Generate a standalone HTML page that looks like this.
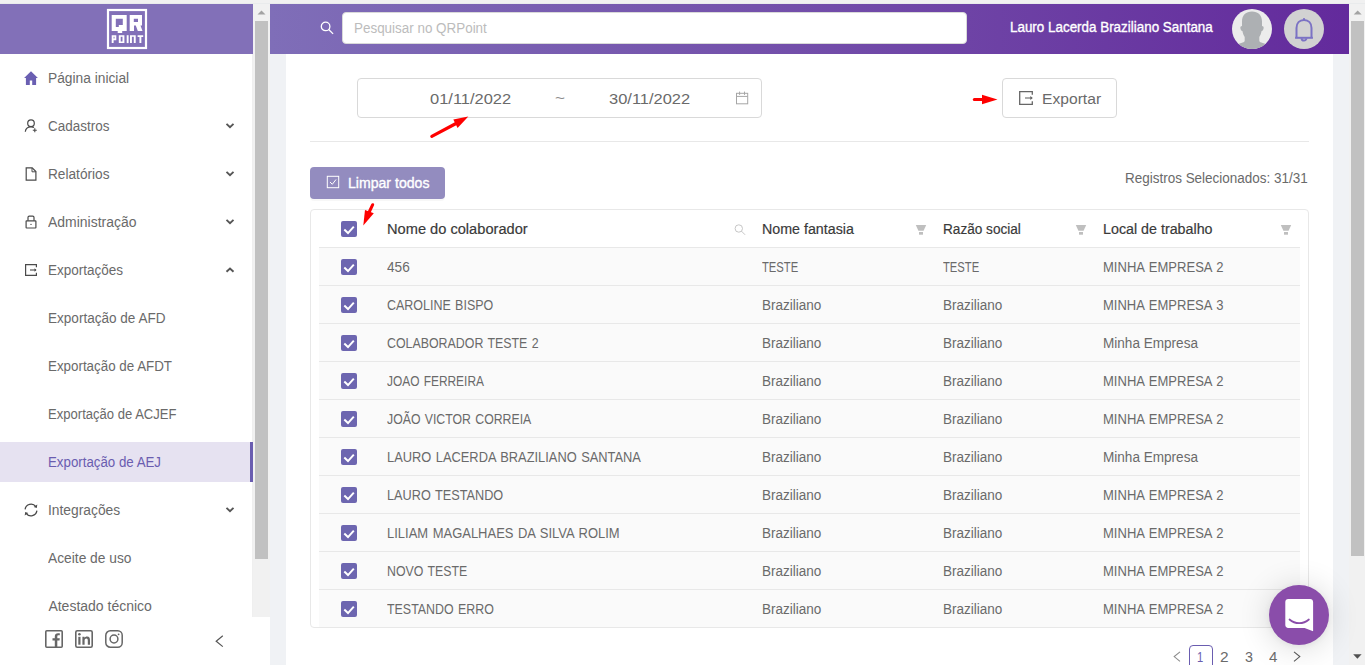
<!DOCTYPE html>
<html><head><meta charset="utf-8">
<style>
*{box-sizing:border-box;margin:0;padding:0}
html,body{width:1365px;height:665px;overflow:hidden}
body{background:#f0f2f5;font-family:"Liberation Sans",sans-serif;position:relative;color:#5a5a5a;font-size:14px}
.abs{position:absolute}
svg{position:absolute;overflow:visible}
#topstrip{left:0;top:0;width:1365px;height:4px;background:#f1f1f1;border-bottom:1px solid #e9ebec}
#side{left:0;top:4px;width:253px;height:661px;background:#fff}
#sidehead{left:0;top:4px;width:253px;height:50px;background:#8270b8}
#sidefoot{left:0;top:617px;width:270px;height:48px;background:#fff}
#sscroll{left:253px;top:4px;width:17px;height:613px;background:#f1f1f1}
#sthumb{left:255px;top:21px;width:13px;height:538px;background:#c1c1c1}
#tophead{left:270px;top:4px;width:1079px;height:50px;background:linear-gradient(90deg,#7f6eb8 0%,#7451ab 45%,#632a9c 100%)}
#main{left:286px;top:54px;width:1047px;height:611px;background:#fff}
#mscroll{left:1349px;top:4px;width:16px;height:661px;background:#f1f1f1}
#mthumb{left:1351px;top:21px;width:13px;height:535px;background:#c1c1c1}
#sel{left:0;top:442px;width:253px;height:40px;background:#e6e2f1;border-right:3px solid #6a5db0}
#search{left:342px;top:12px;width:625px;height:32px;background:#fff;border-radius:4px;border:1px solid #d9d9d9}
#datebox{left:357px;top:78px;width:405px;height:40px;border:1px solid #d9d9d9;border-radius:4px;background:#fff}
#expbtn{left:1002px;top:78px;width:115px;height:40px;border:1px solid #d9d9d9;border-radius:4px;background:#fff}
#divider{left:310px;top:141px;width:999px;height:1px;background:#e8e8e8}
#limpar{left:310px;top:167px;width:135px;height:32px;background:#938cbf;border-radius:4px;box-shadow:0 2px 0 rgba(0,0,0,0.03)}
#tbox{left:310px;top:209px;width:999px;height:419px;border:1px solid #e8e8e8;border-radius:4px;background:#fff}
.row{position:absolute;left:319px;width:981px;height:38px;background:#fafafa;border-bottom:1px solid #e8e8e8}
#hrow{position:absolute;left:319px;top:247px;width:981px;height:1px;background:#e8e8e8}
.cb{position:absolute;left:341px;width:16px;height:16px;background:#6d66b0;border-radius:2px}
.cb svg{left:0;top:0}
.t{position:absolute;white-space:pre;line-height:20px;height:20px;transform-origin:0 50%}
#pg1{left:1189px;top:645px;width:24px;height:24px;border:1px solid #6a5db0;border-radius:4px;background:#fff}
#avatar{left:1232px;top:9px;width:40px;height:40px;border-radius:50%;background:#ececec;overflow:hidden}
#bellc{left:1284px;top:9px;width:40px;height:40px;border-radius:50%;background:#d2d2d2}
#chat{left:1269px;top:585px;width:60px;height:60px;border-radius:50%;background:#8a4daa;box-shadow:0 1px 6px rgba(0,0,0,0.06),0 2px 32px rgba(0,0,0,0.16)}
</style></head><body>
<div class="abs" id="topstrip"></div>
<div class="abs" id="side"></div>
<div class="abs" id="sidehead"></div>
<div class="abs" id="sscroll"></div>
<div class="abs" id="sthumb"></div>
<div class="abs" id="sidefoot"></div>
<div class="abs" id="tophead"></div>
<div class="abs" id="main"></div>
<div class="abs" id="mscroll"></div>
<div class="abs" id="mthumb"></div>
<div class="abs" style="left:252px;top:54px;width:1px;height:563px;background:#efefef"></div>
<div class="abs" id="sel"></div>
<div class="abs" id="search"></div>
<div class="abs" id="datebox"></div>
<div class="abs" id="expbtn"></div>
<div class="abs" id="divider"></div>
<div class="abs" id="limpar"></div>
<div class="abs" id="tbox"></div>
<div id="hrow"></div>
<div class="row" style="top:248px"></div>
<div class="row" style="top:286px"></div>
<div class="row" style="top:324px"></div>
<div class="row" style="top:362px"></div>
<div class="row" style="top:400px"></div>
<div class="row" style="top:438px"></div>
<div class="row" style="top:476px"></div>
<div class="row" style="top:514px"></div>
<div class="row" style="top:552px"></div>
<div class="row" style="top:590px"></div>
<div class="cb" style="top:221px"><svg width="16" height="16" viewBox="0 0 16 16"><path d="M3.300 8.600l3.700 3.500l5.800-6.400" fill="none" stroke="#fff" stroke-width="2"/></svg></div>
<div class="cb" style="top:259px"><svg width="16" height="16" viewBox="0 0 16 16"><path d="M3.300 8.600l3.700 3.500l5.800-6.400" fill="none" stroke="#fff" stroke-width="2"/></svg></div>
<div class="cb" style="top:297px"><svg width="16" height="16" viewBox="0 0 16 16"><path d="M3.300 8.600l3.700 3.500l5.800-6.400" fill="none" stroke="#fff" stroke-width="2"/></svg></div>
<div class="cb" style="top:335px"><svg width="16" height="16" viewBox="0 0 16 16"><path d="M3.300 8.600l3.700 3.500l5.800-6.400" fill="none" stroke="#fff" stroke-width="2"/></svg></div>
<div class="cb" style="top:373px"><svg width="16" height="16" viewBox="0 0 16 16"><path d="M3.300 8.600l3.700 3.500l5.800-6.400" fill="none" stroke="#fff" stroke-width="2"/></svg></div>
<div class="cb" style="top:411px"><svg width="16" height="16" viewBox="0 0 16 16"><path d="M3.300 8.600l3.700 3.500l5.800-6.400" fill="none" stroke="#fff" stroke-width="2"/></svg></div>
<div class="cb" style="top:449px"><svg width="16" height="16" viewBox="0 0 16 16"><path d="M3.300 8.600l3.700 3.500l5.800-6.400" fill="none" stroke="#fff" stroke-width="2"/></svg></div>
<div class="cb" style="top:487px"><svg width="16" height="16" viewBox="0 0 16 16"><path d="M3.300 8.600l3.700 3.500l5.800-6.400" fill="none" stroke="#fff" stroke-width="2"/></svg></div>
<div class="cb" style="top:525px"><svg width="16" height="16" viewBox="0 0 16 16"><path d="M3.300 8.600l3.700 3.500l5.800-6.400" fill="none" stroke="#fff" stroke-width="2"/></svg></div>
<div class="cb" style="top:563px"><svg width="16" height="16" viewBox="0 0 16 16"><path d="M3.300 8.600l3.700 3.500l5.800-6.400" fill="none" stroke="#fff" stroke-width="2"/></svg></div>
<div class="cb" style="top:601px"><svg width="16" height="16" viewBox="0 0 16 16"><path d="M3.300 8.600l3.700 3.500l5.800-6.400" fill="none" stroke="#fff" stroke-width="2"/></svg></div>

<div class="abs" id="pg1"></div>
<div class="abs" id="avatar"><svg width="40" height="40" viewBox="0 0 40 40" style="left:0;top:0"><path d="M20 2.5c-6 0-10 3.5-10 10v4.5c-1.3 0-1.8 1-1.6 2.3.2 1.500.9 2.600 2 2.700.5 2.500 1.300 4.500 2.300 6v3.500c0 1-.7 1.800-2 2L3 36v6h34v-6l-7.700-2.500c-1.300-.3-2-1-2-2V28c1-1.500 1.800-3.500 2.300-6 1.100-.1 1.800-1.200 2-2.700.2-1.300-.3-2.300-1.600-2.300v-4.500c0-6.500-4-10-10-10z" fill="#adb0b3"/></svg></div>
<div class="abs" id="bellc"></div>
<div class="abs" id="chat"></div>
<!-- logo -->
<svg style="left:107px;top:9px" width="40" height="40" viewBox="0 0 40 40">
<rect x="1" y="1" width="38" height="38" fill="none" stroke="#fff" stroke-width="2.200"/>
<path fill="#fff" fill-rule="evenodd" d="M4.700 6h15v16h-4.500v2h-4.500v-2h-6zM8.800 9.700v8.300h3v-2h4v-6.300z"/>
<path fill="#fff" fill-rule="evenodd" d="M22.700 6h12.300v10.500h-1.500l2 5.500h-4.700l-2-5.500h-1.800v5.500h-4.300zM26.800 9.700v3.300h4.200v-3.300z"/>
<g fill="#fff">
<path fill-rule="evenodd" d="M4.700 26.200h4.600v5h-2.700v2.900h-1.900zM6.600 27.800v1.800h0.900v-1.800z"/>
<path fill-rule="evenodd" d="M11.800 26.200h5.600v7.900h-5.600zM13.700 27.800v4.700h1.800v-4.700z"/>
<rect x="19.700" y="26.200" width="1.900" height="7.900"/>
<path d="M23 26.200h5.700v7.900h-1.900v-6.300h-1.900v6.300h-1.900z"/>
<path d="M30.600 26.200h5.600v1.700h-1.850v6.200h-1.900v-6.200h-1.850z"/>
</g>
</svg>
<!-- scroll arrows -->
<svg style="left:253px;top:4px" width="17" height="17"><path d="M4.500 10.500l4-4l4 4z" fill="#a3a3a3"/></svg>
<svg style="left:1349px;top:4px" width="16" height="17"><path d="M4.700 10.500l4-4l4 4z" fill="#a3a3a3"/></svg>
<svg style="left:1349px;top:648px" width="16" height="17"><path d="M4.200 6.300l4.200 4.400l4.200-4.400z" fill="#505050"/></svg>
<!-- home -->
<svg style="left:24px;top:71px" width="14" height="14" viewBox="0 0 14 14"><path d="M7 0.300L0.100 6.900h1.800v7h3.900v-4.300h2.400v4.300h3.900v-7h1.800z" fill="#6a5fb2"/></svg>
<!-- user add -->
<svg style="left:24px;top:119px" width="14" height="14" viewBox="0 0 14 14" fill="none" stroke="#4a4a4a" stroke-width="1.200"><circle cx="7" cy="4.200" r="3.300"/><path d="M1.300 12.800c.3-3 2.500-5 5.700-5c1.200 0 2.200.3 3 .8"/><path d="M10.800 9.300v4M8.800 11.300h4" stroke-width="1.100"/></svg>
<!-- file -->
<svg style="left:25px;top:167px" width="12" height="14" viewBox="0 0 12 14" fill="none" stroke="#4a4a4a" stroke-width="1.200"><path d="M1.200 0.900h6l3.700 3.700v8.600h-9.700z"/><path d="M7 1v3.800h3.800" stroke-width="1"/></svg>
<!-- lock -->
<svg style="left:25px;top:215px" width="12" height="14" viewBox="0 0 12 14" fill="none" stroke="#4a4a4a" stroke-width="1.200"><rect x="1.100" y="5.800" width="9.800" height="7.200" rx="0.500"/><path d="M3 5.800v-3.300c0-.8.500-1.300 1.300-1.300h3.400c.8 0 1.300.5 1.300 1.300v3.300"/><circle cx="6" cy="9.400" r="0.700" fill="#4a4a4a" stroke="none"/></svg>
<!-- export (sidebar) -->
<svg style="left:25px;top:264px" width="12" height="12" viewBox="0 0 12 12" fill="none" stroke="#4a4a4a" stroke-width="1.200"><path d="M11.400 3.200v-2.600h-10.800v10.800h10.800v-2.600"/><path d="M5 6h6" stroke-width="1.100"/><path d="M9.500 4.300l2 1.700l-2 1.700z" fill="#4a4a4a" stroke="none"/></svg>
<!-- sync -->
<svg style="left:24px;top:503px" width="14" height="14" viewBox="0 0 14 14" fill="none" stroke="#4a4a4a" stroke-width="1.300"><path d="M1.100 6.300a5.900 5.900 0 0 1 10.700-2.600"/><path d="M12.900 7.700a5.900 5.900 0 0 1-10.700 2.600"/><path d="M13.300 1.600l-.5 3.400l-3.100-1z" fill="#4a4a4a" stroke="none"/><path d="M0.700 12.400l.5-3.400l3.100 1z" fill="#4a4a4a" stroke="none"/></svg>
<!-- chevrons -->
<svg style="left:226px;top:123px" width="8" height="6"><path d="M0.500 0.900l3.500 3.300l3.500-3.300" fill="none" stroke="#555" stroke-width="1.900"/></svg>
<svg style="left:226px;top:171px" width="8" height="6"><path d="M0.500 0.900l3.500 3.300l3.500-3.300" fill="none" stroke="#555" stroke-width="1.900"/></svg>
<svg style="left:226px;top:219px" width="8" height="6"><path d="M0.500 0.900l3.500 3.300l3.500-3.300" fill="none" stroke="#555" stroke-width="1.900"/></svg>
<svg style="left:226px;top:267px" width="8" height="6"><path d="M0.500 4.800l3.500-3.300l3.500 3.300" fill="none" stroke="#555" stroke-width="1.900"/></svg>
<svg style="left:226px;top:507px" width="8" height="6"><path d="M0.500 0.900l3.500 3.300l3.500-3.300" fill="none" stroke="#555" stroke-width="1.900"/></svg>
<!-- social -->
<svg style="left:45px;top:630px" width="18" height="18" viewBox="0 0 18 18"><rect x="0.800" y="0.800" width="16.400" height="16.400" rx="1" fill="none" stroke="#666" stroke-width="1.600"/><path d="M9.800 17.300v-6.800h-2.300v-2.200h2.300v-1.800c0-2.200 1.300-3.300 3.200-3.300c.8 0 1.400.1 1.800.1v2h-1.200c-1 0-1.300.5-1.300 1.300v1.700h2.500l-.3 2.200h-2.200v6.800z" fill="#666"/></svg>
<svg style="left:75px;top:630px" width="18" height="18" viewBox="0 0 18 18"><rect x="0.800" y="0.800" width="16.400" height="16.400" rx="1.500" fill="none" stroke="#666" stroke-width="1.600"/><rect x="3.300" y="6.800" width="2.200" height="7.900" fill="#666"/><circle cx="4.400" cy="4.200" r="1.300" fill="#666"/><path d="M7.400 6.800h2.100v1.100c.4-.7 1.300-1.300 2.600-1.300c2.300 0 2.900 1.500 2.900 3.600v4.500h-2.200v-4c0-1-.1-2.200-1.400-2.200c-1.400 0-1.800 1-1.800 2.100v4.100h-2.200z" fill="#666"/></svg>
<svg style="left:105px;top:630px" width="18" height="18" viewBox="0 0 18 18" fill="none" stroke="#666" stroke-width="1.500"><rect x="0.800" y="0.800" width="16.400" height="16.400" rx="4.500"/><circle cx="9" cy="9" r="3.900"/><circle cx="13.600" cy="4.300" r="0.900" fill="#666" stroke="none"/></svg>
<svg style="left:215px;top:635px" width="9" height="13"><path d="M7.800 0.800l-6.600 5.400l6.600 5.400" fill="none" stroke="#555" stroke-width="1.200"/></svg>
<!-- header search -->
<svg style="left:320px;top:21px" width="14" height="14" fill="none" stroke="#fff" stroke-width="1.300"><circle cx="5.600" cy="5.400" r="4.300"/><path d="M8.700 8.500l4.400 4.400"/></svg>
<!-- bell -->
<svg style="left:1294px;top:17px" width="20" height="26" viewBox="0 0 20 26" fill="none" stroke="#7b72c4" stroke-width="2"><path d="M2.500 20.800v-9.800c0-4.800 3-8 7.500-8s7.500 3.200 7.500 8v9.800"/><path d="M1.100 20.800h17.800"/><path d="M10 3v-2" stroke-width="1.600"/><path d="M7.600 21.200a2.400 2.400 0 0 0 4.800 0"/></svg>
<!-- calendar -->
<svg style="left:736px;top:91px" width="13" height="14" viewBox="0 0 13 14" fill="none" stroke="#a6a6a6" stroke-width="1"><rect x="0.500" y="2.300" width="11.200" height="10.500"/><path d="M0.500 5.400h11.200M3.600 0.600v3.300M8.500 0.600v3.300"/></svg>
<!-- export in button -->
<svg style="left:1019px;top:91px" width="14" height="14" viewBox="0 0 14 14" fill="none" stroke="#666" stroke-width="1.300"><path d="M13.300 3.700v-3h-12.600v12.600h12.600v-3"/><path d="M6 7h7" stroke-width="1.100"/><path d="M11.300 5.100l2.500 1.900l-2.500 1.900z" fill="#666" stroke="none"/></svg>
<!-- red arrows -->
<svg style="left:0;top:0" width="1365" height="665" fill="#fe0000" stroke="#fe0000">
<path d="M431.800 136.300L456 123.500" stroke-width="3.200" stroke-linecap="round" fill="none"/><path d="M468.300 116.500L453.300 119.500L457.600 128z" stroke="none"/>
<path d="M974.300 99.500H984" stroke-width="3" stroke-linecap="round" fill="none"/><path d="M997.500 99.500L982 94.800V104.200z" stroke="none"/>
<path d="M372.700 204.700L369 212.500" stroke-width="3" stroke-linecap="round" fill="none"/><path d="M363.300 225.500L365 210L373.800 213.300z" stroke="none"/>
</svg>
<!-- limpar icon -->
<svg style="left:326px;top:175px" width="14" height="14" fill="none" stroke="#fff"><rect x="1.300" y="1.300" width="11.400" height="11.400" stroke-width="1"/><path d="M4 7l2.300 2.300l3.700-4.800" stroke-width="1"/></svg>
<!-- table header icons -->
<svg style="left:734px;top:224px" width="12" height="12" fill="none" stroke="#bfbfbf" stroke-width="0.900"><circle cx="4.800" cy="4.500" r="3.700"/><path d="M7.500 7.200l3.600 3.600"/></svg>
<svg style="left:915px;top:225px" width="12" height="10" fill="#bfbfbf"><path d="M0.800 0h10.400l-2.600 5.700h-5.200z"/><rect x="4" y="7" width="4" height="2.700"/></svg>
<svg style="left:1075px;top:225px" width="12" height="10" fill="#bfbfbf"><path d="M0.800 0h10.400l-2.600 5.700h-5.200z"/><rect x="4" y="7" width="4" height="2.700"/></svg>
<svg style="left:1280px;top:225px" width="12" height="10" fill="#bfbfbf"><path d="M0.800 0h10.400l-2.600 5.700h-5.200z"/><rect x="4" y="7" width="4" height="2.700"/></svg>
<!-- chat -->
<svg style="left:1269px;top:585px" width="60" height="60" viewBox="0 0 60 60"><path d="M19.200 14h22c1.600 0 2.900 1.300 2.900 2.900v29.300l-8.500-3.200h-16.400c-1.600 0-2.900-1.300-2.900-2.900v-23.200c0-1.600 1.300-2.900 2.900-2.900z" fill="#fff"/><path d="M20.500 34.500c3 2.600 6 3.700 9.700 3.700s6.700-1.100 9.700-3.700" fill="none" stroke="#8a4daa" stroke-width="1.700" stroke-linecap="round"/></svg>
<!-- pagination arrows -->
<svg style="left:1173px;top:651px" width="8" height="12"><path d="M7 0.800l-5.800 4.800l5.800 4.800" fill="none" stroke="#8c8c8c" stroke-width="1.100"/></svg>
<svg style="left:1293px;top:651px" width="8" height="12"><path d="M1 0.800l5.800 4.800l-5.800 4.800" fill="none" stroke="#555" stroke-width="1.100"/></svg>

<div class="t" style="left:48.07px;top:68.0px;font-size:14px;font-weight:400;color:#6a6a6a;transform:scaleX(0.9832);">Página inicial</div>
<div class="t" style="left:47.98px;top:116.0px;font-size:14px;font-weight:400;color:#6a6a6a;transform:scaleX(0.9616);">Cadastros</div>
<div class="t" style="left:48.08px;top:164.0px;font-size:14px;font-weight:400;color:#6a6a6a;transform:scaleX(0.9763);">Relatórios</div>
<div class="t" style="left:48.30px;top:212.0px;font-size:14px;font-weight:400;color:#6a6a6a;transform:scaleX(0.9972);">Administração</div>
<div class="t" style="left:48.09px;top:260.0px;font-size:14px;font-weight:400;color:#6a6a6a;transform:scaleX(0.9645);">Exportações</div>
<div class="t" style="left:48.09px;top:308.0px;font-size:14px;font-weight:400;color:#6a6a6a;transform:scaleX(0.9682);">Exportação de AFD</div>
<div class="t" style="left:48.11px;top:356.0px;font-size:14px;font-weight:400;color:#6a6a6a;transform:scaleX(0.9544);">Exportação de AFDT</div>
<div class="t" style="left:48.13px;top:404.0px;font-size:14px;font-weight:400;color:#6a6a6a;transform:scaleX(0.9331);">Exportação de ACJEF</div>
<div class="t" style="left:48.11px;top:452.0px;font-size:14px;font-weight:400;color:#6a5db0;transform:scaleX(0.9490);">Exportação de AEJ</div>
<div class="t" style="left:48.07px;top:500.0px;font-size:14px;font-weight:400;color:#6a6a6a;transform:scaleX(0.9860);">Integrações</div>
<div class="t" style="left:48.40px;top:548.0px;font-size:14px;font-weight:400;color:#6a6a6a;transform:scaleX(0.9840);">Aceite de uso</div>
<div class="t" style="left:48.40px;top:596.0px;font-size:14px;font-weight:400;color:#6a6a6a;transform:scaleX(1.0000);">Atestado técnico</div>
<div class="t" style="left:353.80px;top:18.0px;font-size:14px;font-weight:400;color:#bcbcbc;transform:scaleX(0.9588);">Pesquisar no QRPoint</div>
<div class="t" style="left:1009.84px;top:17.0px;font-size:14px;font-weight:400;color:#ffffff;transform:scaleX(0.9578);-webkit-text-stroke:0.35px #fff;">Lauro Lacerda Braziliano Santana</div>
<div class="t" style="left:429.97px;top:89.0px;font-size:15.5px;font-weight:400;color:#6a6a6a;transform:scaleX(1.0618);">01/11/2022</div>
<div class="t" style="left:554.89px;top:88.0px;font-size:14px;font-weight:400;color:#8c8c8c;transform:scaleX(1.2143);">~</div>
<div class="t" style="left:608.67px;top:89.0px;font-size:15.5px;font-weight:400;color:#6a6a6a;transform:scaleX(1.0618);">30/11/2022</div>
<div class="t" style="left:1041.74px;top:89.0px;font-size:15.5px;font-weight:400;color:#6a6a6a;transform:scaleX(1.0088);">Exportar</div>
<div class="t" style="left:348.39px;top:173.0px;font-size:14px;font-weight:400;color:#ffffff;transform:scaleX(1.0063);-webkit-text-stroke:0.35px #fff;">Limpar todos</div>
<div class="t" style="left:1124.80px;top:168.0px;font-size:14px;font-weight:400;color:#6a6a6a;transform:scaleX(0.9622);">Registros Selecionados: 31/31</div>
<div class="t" style="left:386.86px;top:219.0px;font-size:14px;font-weight:400;color:#3a3a3a;transform:scaleX(1.0449);-webkit-text-stroke:0.18px #3a3a3a;">Nome do colaborador</div>
<div class="t" style="left:761.68px;top:219.0px;font-size:14px;font-weight:400;color:#3a3a3a;transform:scaleX(1.0179);-webkit-text-stroke:0.18px #3a3a3a;">Nome fantasia</div>
<div class="t" style="left:942.73px;top:219.0px;font-size:14px;font-weight:400;color:#3a3a3a;transform:scaleX(0.9712);-webkit-text-stroke:0.18px #3a3a3a;">Razão social</div>
<div class="t" style="left:1102.88px;top:219.0px;font-size:14px;font-weight:400;color:#3a3a3a;transform:scaleX(1.0198);-webkit-text-stroke:0.18px #3a3a3a;">Local de trabalho</div>
<div class="t" style="left:386.86px;top:257.0px;font-size:14px;font-weight:400;color:#6a6a6a;transform:scaleX(0.9733);">456</div>
<div class="t" style="left:761.70px;top:257.0px;font-size:14px;font-weight:400;color:#6a6a6a;transform:scaleX(0.8023);">TESTE</div>
<div class="t" style="left:942.70px;top:257.0px;font-size:14px;font-weight:400;color:#6a6a6a;transform:scaleX(0.8023);">TESTE</div>
<div class="t" style="left:1102.74px;top:257.0px;font-size:14px;font-weight:400;color:#6a6a6a;transform:scaleX(0.9307);word-spacing:1px;">MINHA EMPRESA 2</div>
<div class="t" style="left:386.63px;top:295.0px;font-size:14px;font-weight:400;color:#6a6a6a;transform:scaleX(0.8909);word-spacing:1px;">CAROLINE BISPO</div>
<div class="t" style="left:761.59px;top:295.0px;font-size:14px;font-weight:400;color:#6a6a6a;transform:scaleX(0.9657);">Braziliano</div>
<div class="t" style="left:942.59px;top:295.0px;font-size:14px;font-weight:400;color:#6a6a6a;transform:scaleX(0.9657);">Braziliano</div>
<div class="t" style="left:1102.74px;top:295.0px;font-size:14px;font-weight:400;color:#6a6a6a;transform:scaleX(0.9299);word-spacing:1px;">MINHA EMPRESA 3</div>
<div class="t" style="left:386.64px;top:333.0px;font-size:14px;font-weight:400;color:#6a6a6a;transform:scaleX(0.8847);word-spacing:1px;">COLABORADOR TESTE 2</div>
<div class="t" style="left:761.59px;top:333.0px;font-size:14px;font-weight:400;color:#6a6a6a;transform:scaleX(0.9657);">Braziliano</div>
<div class="t" style="left:942.59px;top:333.0px;font-size:14px;font-weight:400;color:#6a6a6a;transform:scaleX(0.9657);">Braziliano</div>
<div class="t" style="left:1102.69px;top:333.0px;font-size:14px;font-weight:400;color:#6a6a6a;transform:scaleX(0.9685);">Minha Empresa</div>
<div class="t" style="left:386.89px;top:371.0px;font-size:14px;font-weight:400;color:#6a6a6a;transform:scaleX(0.8520);word-spacing:1px;">JOAO FERREIRA</div>
<div class="t" style="left:761.59px;top:371.0px;font-size:14px;font-weight:400;color:#6a6a6a;transform:scaleX(0.9657);">Braziliano</div>
<div class="t" style="left:942.59px;top:371.0px;font-size:14px;font-weight:400;color:#6a6a6a;transform:scaleX(0.9657);">Braziliano</div>
<div class="t" style="left:1102.74px;top:371.0px;font-size:14px;font-weight:400;color:#6a6a6a;transform:scaleX(0.9307);word-spacing:1px;">MINHA EMPRESA 2</div>
<div class="t" style="left:386.88px;top:409.0px;font-size:14px;font-weight:400;color:#6a6a6a;transform:scaleX(0.8780);word-spacing:1px;">JOÃO VICTOR CORREIA</div>
<div class="t" style="left:761.59px;top:409.0px;font-size:14px;font-weight:400;color:#6a6a6a;transform:scaleX(0.9657);">Braziliano</div>
<div class="t" style="left:942.59px;top:409.0px;font-size:14px;font-weight:400;color:#6a6a6a;transform:scaleX(0.9657);">Braziliano</div>
<div class="t" style="left:1102.74px;top:409.0px;font-size:14px;font-weight:400;color:#6a6a6a;transform:scaleX(0.9307);word-spacing:1px;">MINHA EMPRESA 2</div>
<div class="t" style="left:386.75px;top:447.0px;font-size:14px;font-weight:400;color:#6a6a6a;transform:scaleX(0.9181);word-spacing:1px;">LAURO LACERDA BRAZILIANO SANTANA</div>
<div class="t" style="left:761.59px;top:447.0px;font-size:14px;font-weight:400;color:#6a6a6a;transform:scaleX(0.9657);">Braziliano</div>
<div class="t" style="left:942.59px;top:447.0px;font-size:14px;font-weight:400;color:#6a6a6a;transform:scaleX(0.9657);">Braziliano</div>
<div class="t" style="left:1102.69px;top:447.0px;font-size:14px;font-weight:400;color:#6a6a6a;transform:scaleX(0.9685);">Minha Empresa</div>
<div class="t" style="left:386.77px;top:485.0px;font-size:14px;font-weight:400;color:#6a6a6a;transform:scaleX(0.9077);word-spacing:1px;">LAURO TESTANDO</div>
<div class="t" style="left:761.59px;top:485.0px;font-size:14px;font-weight:400;color:#6a6a6a;transform:scaleX(0.9657);">Braziliano</div>
<div class="t" style="left:942.59px;top:485.0px;font-size:14px;font-weight:400;color:#6a6a6a;transform:scaleX(0.9657);">Braziliano</div>
<div class="t" style="left:1102.74px;top:485.0px;font-size:14px;font-weight:400;color:#6a6a6a;transform:scaleX(0.9307);word-spacing:1px;">MINHA EMPRESA 2</div>
<div class="t" style="left:386.74px;top:523.0px;font-size:14px;font-weight:400;color:#6a6a6a;transform:scaleX(0.9272);word-spacing:1px;">LILIAM MAGALHAES DA SILVA ROLIM</div>
<div class="t" style="left:761.59px;top:523.0px;font-size:14px;font-weight:400;color:#6a6a6a;transform:scaleX(0.9657);">Braziliano</div>
<div class="t" style="left:942.59px;top:523.0px;font-size:14px;font-weight:400;color:#6a6a6a;transform:scaleX(0.9657);">Braziliano</div>
<div class="t" style="left:1102.74px;top:523.0px;font-size:14px;font-weight:400;color:#6a6a6a;transform:scaleX(0.9307);word-spacing:1px;">MINHA EMPRESA 2</div>
<div class="t" style="left:386.80px;top:561.0px;font-size:14px;font-weight:400;color:#6a6a6a;transform:scaleX(0.8809);word-spacing:1px;">NOVO TESTE</div>
<div class="t" style="left:761.59px;top:561.0px;font-size:14px;font-weight:400;color:#6a6a6a;transform:scaleX(0.9657);">Braziliano</div>
<div class="t" style="left:942.59px;top:561.0px;font-size:14px;font-weight:400;color:#6a6a6a;transform:scaleX(0.9657);">Braziliano</div>
<div class="t" style="left:1102.74px;top:561.0px;font-size:14px;font-weight:400;color:#6a6a6a;transform:scaleX(0.9307);word-spacing:1px;">MINHA EMPRESA 2</div>
<div class="t" style="left:386.88px;top:599.0px;font-size:14px;font-weight:400;color:#6a6a6a;transform:scaleX(0.8862);word-spacing:1px;">TESTANDO ERRO</div>
<div class="t" style="left:761.59px;top:599.0px;font-size:14px;font-weight:400;color:#6a6a6a;transform:scaleX(0.9657);">Braziliano</div>
<div class="t" style="left:942.59px;top:599.0px;font-size:14px;font-weight:400;color:#6a6a6a;transform:scaleX(0.9657);">Braziliano</div>
<div class="t" style="left:1102.74px;top:599.0px;font-size:14px;font-weight:400;color:#6a6a6a;transform:scaleX(0.9307);word-spacing:1px;">MINHA EMPRESA 2</div>
<div class="t" style="left:1196.90px;top:647.0px;font-size:14px;font-weight:400;color:#6a5db0;transform:scaleX(0.8000);">1</div>
<div class="t" style="left:1220.47px;top:647.0px;font-size:14px;font-weight:400;color:#6a6a6a;transform:scaleX(1.1040);">2</div>
<div class="t" style="left:1244.79px;top:647.0px;font-size:14px;font-weight:400;color:#6a6a6a;transform:scaleX(1.0222);">3</div>
<div class="t" style="left:1268.53px;top:647.0px;font-size:14px;font-weight:400;color:#6a6a6a;transform:scaleX(1.0759);">4</div>
</body></html>
